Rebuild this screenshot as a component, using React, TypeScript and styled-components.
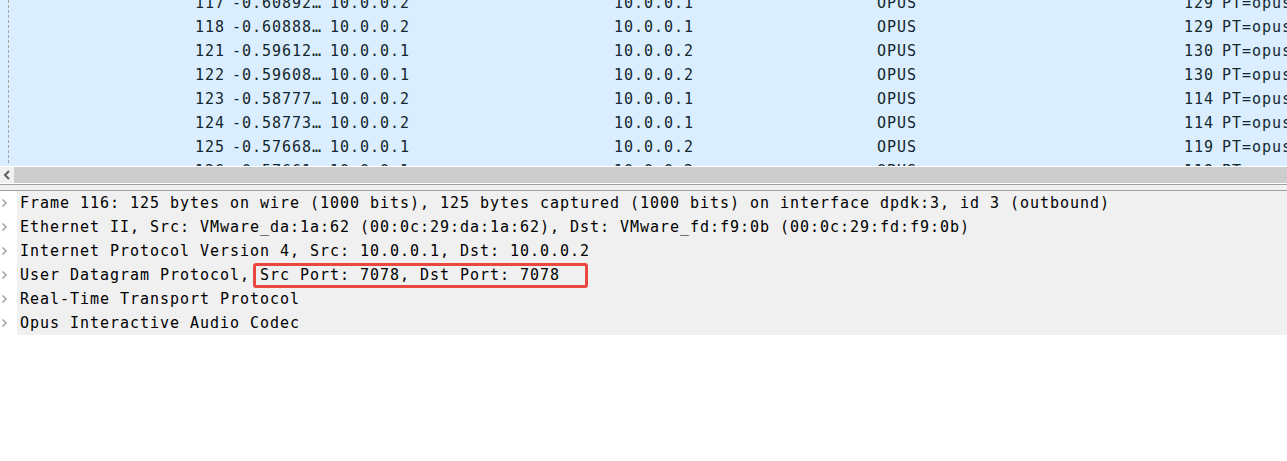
import React from "react";
import styled, { createGlobalStyle } from "styled-components";

const packets = [
  { no: "117", time: "-0.608923411", src: "10.0.0.2", dst: "10.0.0.1", len: "129" },
  { no: "118", time: "-0.608881520", src: "10.0.0.2", dst: "10.0.0.1", len: "129" },
  { no: "121", time: "-0.596127340", src: "10.0.0.1", dst: "10.0.0.2", len: "130" },
  { no: "122", time: "-0.596080115", src: "10.0.0.1", dst: "10.0.0.2", len: "130" },
  { no: "123", time: "-0.587771902", src: "10.0.0.2", dst: "10.0.0.1", len: "114" },
  { no: "124", time: "-0.587732448", src: "10.0.0.2", dst: "10.0.0.1", len: "114" },
  { no: "125", time: "-0.576680231", src: "10.0.0.1", dst: "10.0.0.2", len: "119" },
  { no: "126", time: "-0.576611807", src: "10.0.0.1", dst: "10.0.0.2", len: "119" },
];

const details = [
  "Frame 116: 125 bytes on wire (1000 bits), 125 bytes captured (1000 bits) on interface dpdk:3, id 3 (outbound)",
  "Ethernet II, Src: VMware_da:1a:62 (00:0c:29:da:1a:62), Dst: VMware_fd:f9:0b (00:0c:29:fd:f9:0b)",
  "Internet Protocol Version 4, Src: 10.0.0.1, Dst: 10.0.0.2",
  "User Datagram Protocol, ",
  "Real-Time Transport Protocol",
  "Opus Interactive Audio Codec",
];

const App = () => {
  return (
    <>
      <GlobalStyle />
      <Window>
        <PacketList>
          <RelatedLine />
          <Rows>
            {packets.map((p) => (
              <PacketRow key={p.no}>
                <Cell align="right">{p.no}</Cell>
                <TimeCell>{p.time}</TimeCell>
                <Cell>{p.src}</Cell>
                <Cell>{p.dst}</Cell>
                <Cell>OPUS</Cell>
                <Cell align="right">{p.len}</Cell>
                <Cell>PT=opus, SSRC=0x5a2b1c7e, Seq={p.no}, Time=48000</Cell>
              </PacketRow>
            ))}
          </Rows>
        </PacketList>

        <HScrollBar>
          <ScrollButton>
            <svg width="8" height="10" viewBox="0 0 8 10">
              <path d="M6 1 L2 5 L6 9" fill="none" stroke="#5f5f5f" strokeWidth="2" />
            </svg>
          </ScrollButton>
          <ScrollThumb />
        </HScrollBar>

        <Splitter />

        <DetailTree>
          {details.map((text, i) => (
            <TreeRow key={i}>
              <Expander>
                <svg width="7" height="10" viewBox="0 0 7 10">
                  <path d="M1.5 1.5 L5 5 L1.5 8.5" fill="none" stroke="#999999" strokeWidth="1.4" />
                </svg>
              </Expander>
              <TreeText>
                {text}
                {i === 3 && <Marked>Src Port: 7078, Dst Port: 7078</Marked>}
              </TreeText>
            </TreeRow>
          ))}
        </DetailTree>
      </Window>
    </>
  );
};

const GlobalStyle = createGlobalStyle`
  html, body {
    margin: 0;
    padding: 0;
    background: #ffffff;
    overflow: hidden;
  }
  body {
    font-family: "DejaVu Sans Mono", "Liberation Mono", monospace;
  }
`;

const Window = styled.div`
  width: 1287px;
  height: 461px;
  display: flex;
  flex-direction: column;
  background: #ffffff;
  overflow: hidden;
`;

const PacketList = styled.div`
  position: relative;
  height: 166px;
  background: #daeeff;
  overflow: hidden;
  flex-shrink: 0;
`;

const RelatedLine = styled.div`
  position: absolute; /* drawn over the number column */
  left: 8px;
  top: 0;
  height: 163px;
  border-left: 1px dashed #a3a3a3;
`;

const Rows = styled.div`
  margin-top: -9px;
  display: flex;
  flex-direction: column;
`;

const PacketRow = styled.div`
  display: grid;
  grid-template-columns: 229px 97px 284px 263px 277px 68px 1fr;
  height: 24px;
  align-items: center;
  color: #12272e;
  font-size: 15px;
  letter-spacing: 0.97px;
  white-space: nowrap;
`;

const Cell = styled.div<{ align?: "left" | "right" }>`
  padding: 0 4px;
  text-align: ${({ align }) => align || "left"};
  overflow: hidden;
  white-space: nowrap;
`;

const TimeCell = styled.div`
  padding: 0 0 0 3px;
  overflow: hidden;
  white-space: nowrap;
  text-overflow: ellipsis;
`;

const HScrollBar = styled.div`
  display: flex;
  height: 16px;
  border-top: 1px solid #ffffff;
  flex-shrink: 0;
`;

const ScrollButton = styled.div`
  width: 14px;
  background: #f0f0f0;
  display: flex;
  align-items: center;
  justify-content: center;
`;

const ScrollThumb = styled.div`
  flex: 1;
  background: #cdcdcd;
`;

const Splitter = styled.div`
  height: 5px;
  margin-top: 1px;
  background: #f0f0f0;
  border-top: 1px solid #a0a0a0;
  border-bottom: 1px solid #a0a0a0;
  flex-shrink: 0;
`;

const DetailTree = styled.div`
  display: flex;
  flex-direction: column;
`;

const TreeRow = styled.div`
  display: flex;
  height: 24px;
`;

const Expander = styled.div`
  width: 17px;
  flex-shrink: 0;
  display: flex;
  align-items: center;
  padding-left: 1px;
  box-sizing: border-box;
  background: #ffffff;
`;

const TreeText = styled.div`
  flex: 1;
  background: #f0f0f0;
  padding-left: 3px;
  line-height: 24px;
  font-size: 15px;
  letter-spacing: 0.97px;
  color: #000000;
  white-space: pre;
`;

const Marked = styled.span`
  position: relative;
  &::after {
    content: "";
    position: absolute; /* annotation box drawn over the text */
    left: -7px;
    right: -28px;
    top: -3px;
    bottom: -4px;
    border: 3px solid #e94840;
    border-radius: 3px;
  }
`;

export default App;
